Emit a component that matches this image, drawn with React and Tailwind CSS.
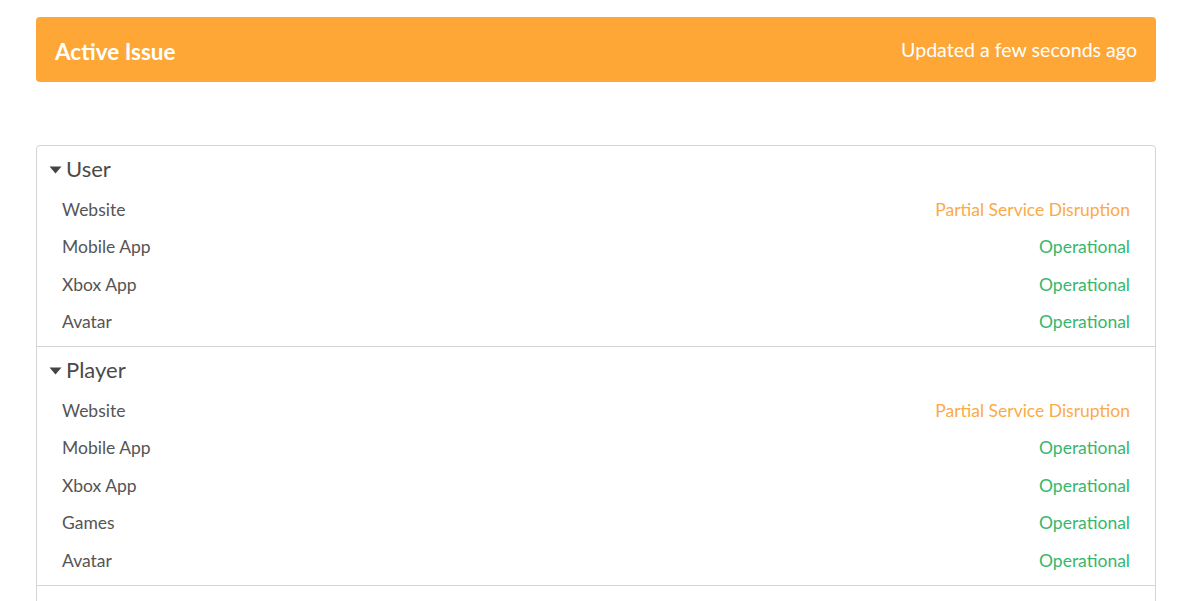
import React from "react"

const groups = [
    {
        name: "User",
        items: [
            { name: "Website", status: "Partial Service Disruption" },
            { name: "Mobile App", status: "Operational" },
            { name: "Xbox App", status: "Operational" },
            { name: "Avatar", status: "Operational" },
        ],
    },
    {
        name: "Player",
        items: [
            { name: "Website", status: "Partial Service Disruption" },
            { name: "Mobile App", status: "Operational" },
            { name: "Xbox App", status: "Operational" },
            { name: "Games", status: "Operational" },
            { name: "Avatar", status: "Operational" },
        ],
    },
]

function Caret() {
    return (
        <svg width="13" height="8" viewBox="0 0 13 8" className="mr-[4px] mt-[2px]">
            <path d="M0.5 0.5 H12.5 L6.5 7.5 Z" fill="#444" />
        </svg>
    )
}

export default function App() {
    return (
        <div className="h-screen overflow-hidden bg-white font-['Lato',sans-serif] text-[#555]">
            <div className="ml-[36px] w-[1120px] pt-[17px]">
                {/* Banner */}
                <div className="flex h-[65px] items-center justify-between rounded-[4px] bg-[#fea737] pl-[19px] pr-[19px] pt-[1px] text-white">
                    <h1 className="pt-[4px] text-[22.5px] font-bold">Active Issue</h1>
                    <span className="text-[19.6px]">Updated a few seconds ago</span>
                </div>

                {/* Components */}
                <div className="mt-[63px] rounded-[4px] border border-[#d4d4d4]">
                    {groups.map((group, gi) => (
                        <div key={gi} className={gi > 0 ? "border-t border-[#d4d4d4]" : ""}>
                            <div className="flex h-[45px] items-center pl-[12px] text-[22px] text-[#4a4a4a]">
                                <Caret />
                                {group.name}
                            </div>
                            <ul className="pb-[5px]">
                                {group.items.map((item, ii) => (
                                    <li
                                        key={ii}
                                        className="flex h-[37.5px] items-center justify-between pl-[25px] pr-[25px] text-[17.5px]"
                                    >
                                        <span>{item.name}</span>
                                        <span
                                            className={
                                                item.status === "Operational"
                                                    ? "text-[#36b76c]"
                                                    : "text-[#fbaa48]"
                                            }
                                        >
                                            {item.status}
                                        </span>
                                    </li>
                                ))}
                            </ul>
                        </div>
                    ))}
                    <div className="h-[40px] border-t border-[#d4d4d4]" />
                </div>
            </div>
        </div>
    )
}
